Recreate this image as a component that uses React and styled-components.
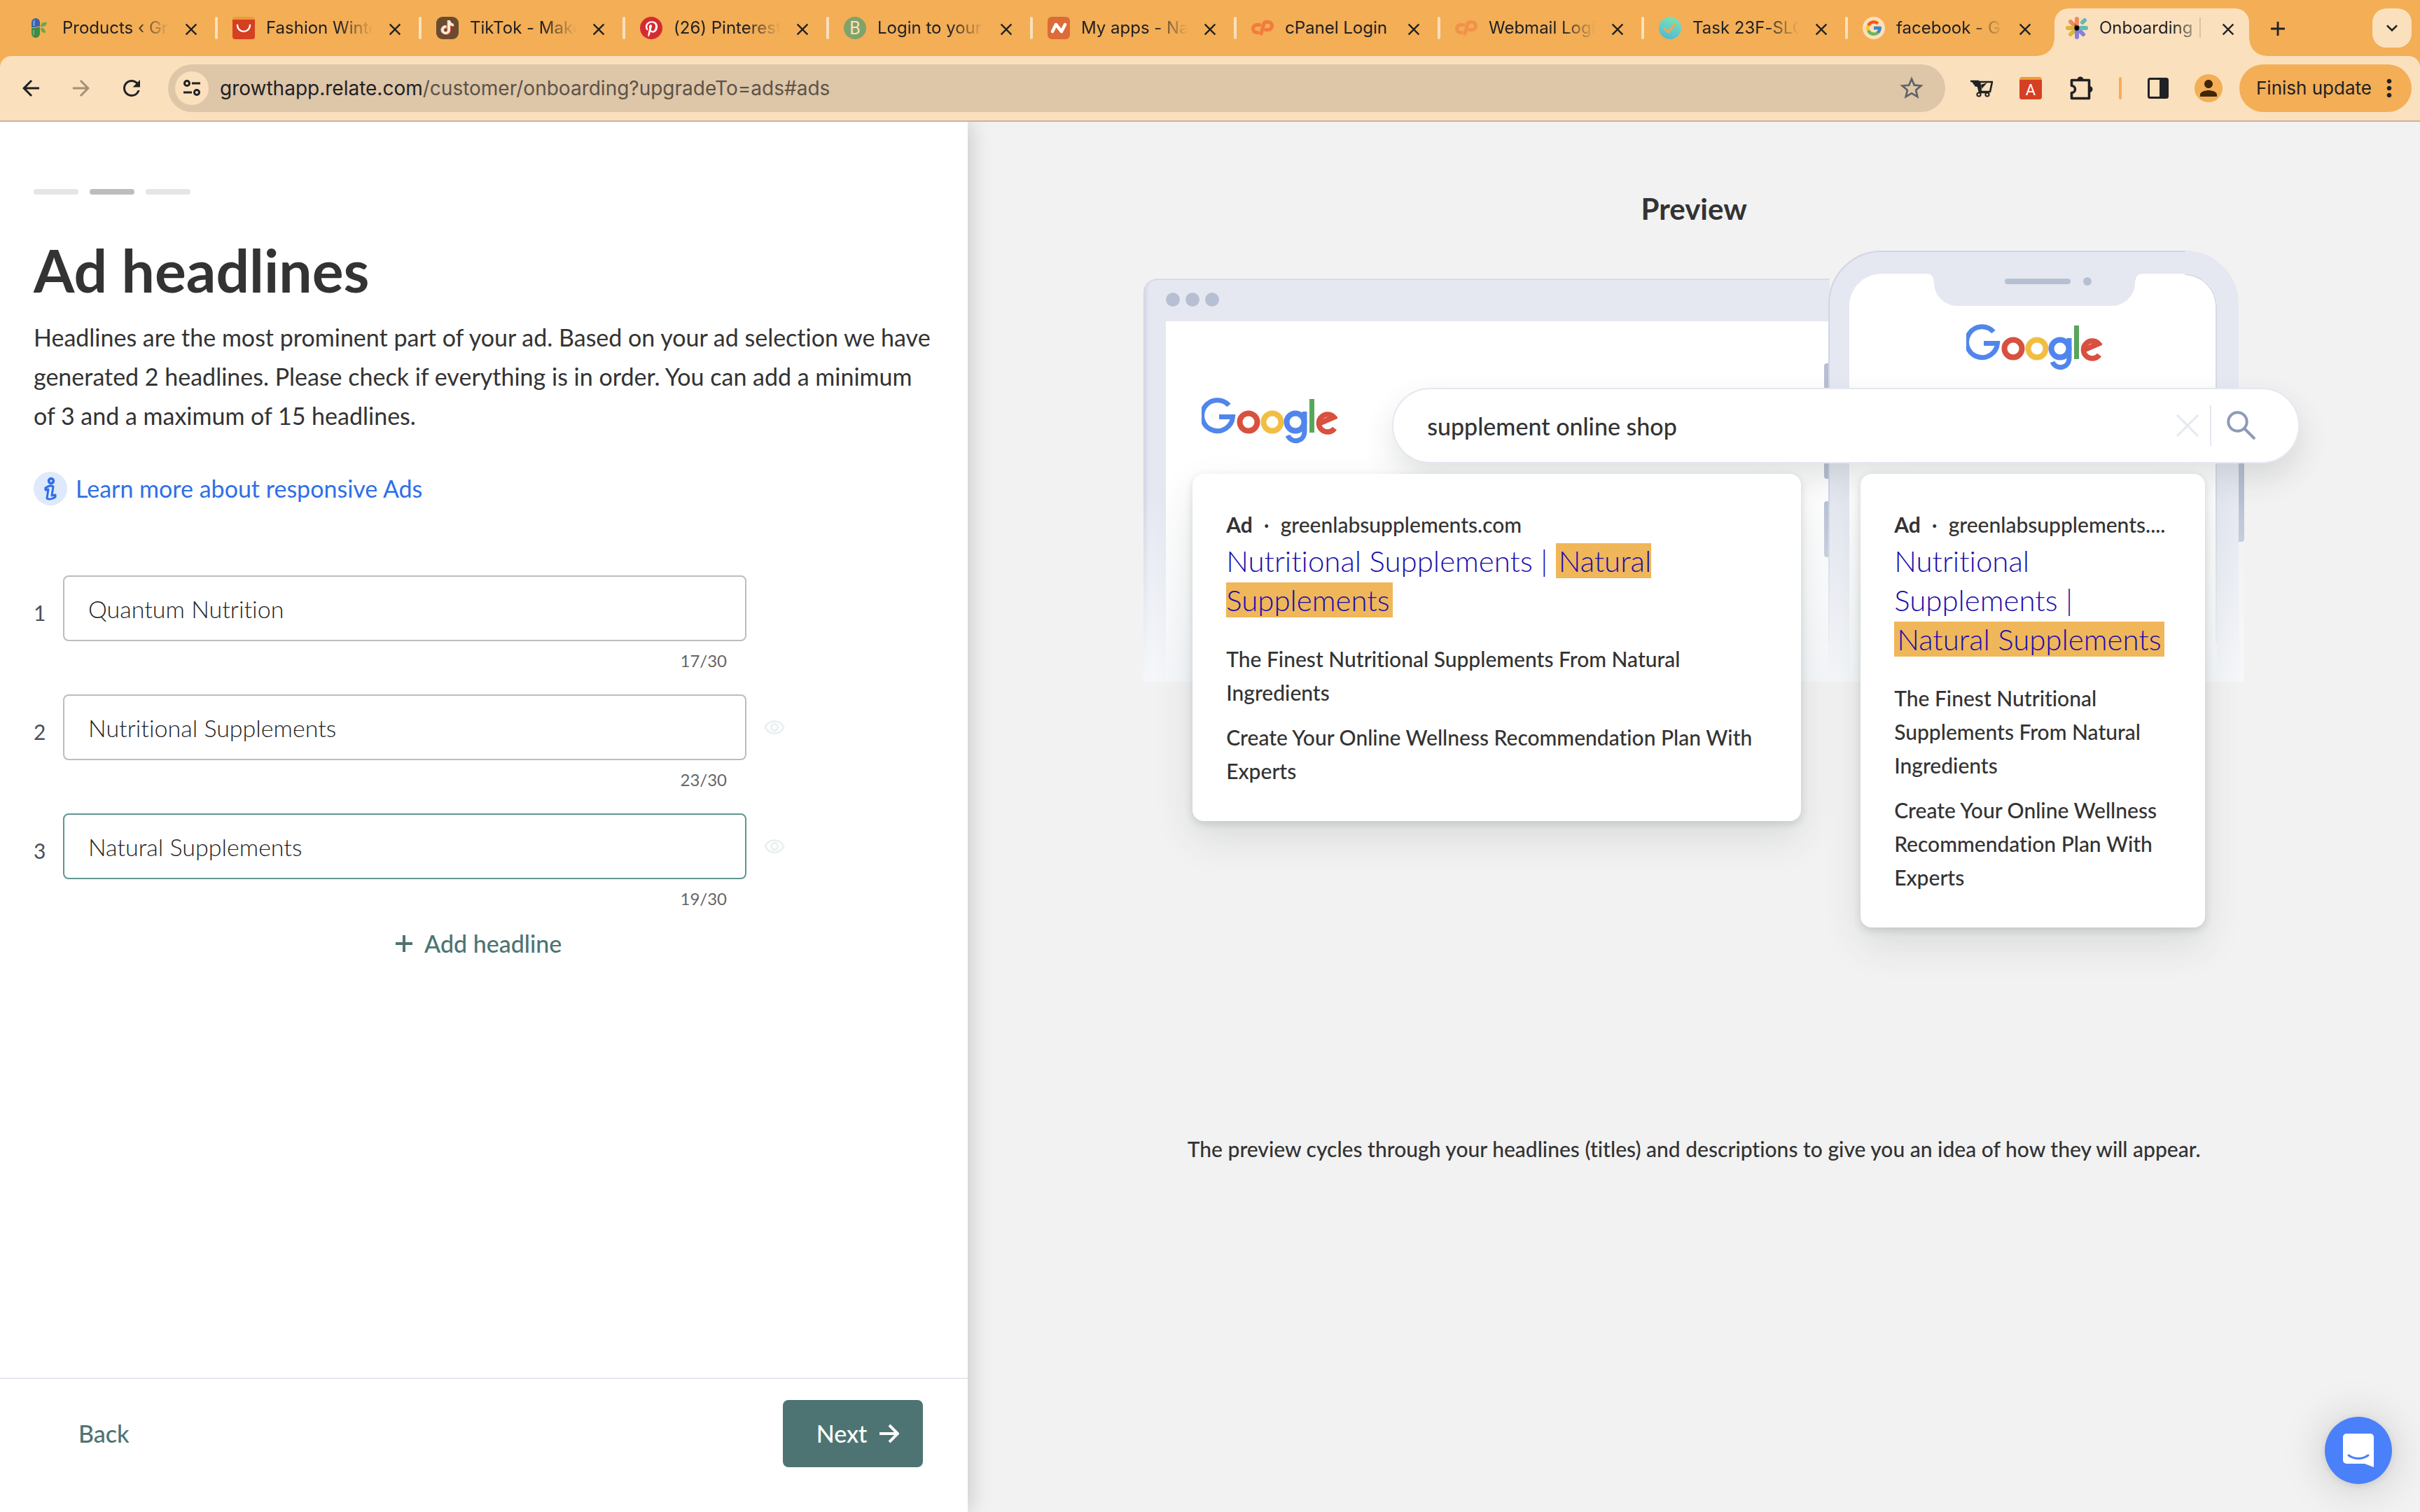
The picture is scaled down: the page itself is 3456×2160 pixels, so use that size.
import React from "react";
import styled, { createGlobalStyle } from "styled-components";
import {
  MdArrowBack,
  MdArrowForward,
  MdRefresh,
  MdStarBorder,
  MdClose,
  MdAdd,
  MdKeyboardArrowDown,
  MdPerson,
  MdMoreVert,
  MdOutlineRemoveRedEye,
} from "react-icons/md";
import { FcGoogle } from "react-icons/fc";
import { FaPinterestP, FaTiktok } from "react-icons/fa";

const color = {
  strip: "#f3ae56",
  bar: "#fbe0bd",
  omnibox: "#dec6a8",
  chromeInk: "#202124",
  ink: "#333333",
  teal: "#4d7472",
  link: "#2f6fe8",
  adTitle: "#1a0dab",
  highlight: "#f0b65a",
  canvas: "#f2f2f2",
  frame: "#e5e8f1",
  frameDark: "#b7c0d3",
};

const uiFont = `Inter, Roboto, sans-serif`;
const textFont = `Lato, "Open Sans", sans-serif`;

const GlobalStyle = createGlobalStyle`
  *, *::before, *::after { box-sizing: border-box; }
  body {
    margin: 0;
    background: ${color.canvas};
    font-family: ${textFont};
    font-variant-ligatures: none;
    color: ${color.ink};
  }
  h1, h2, p, ol, form { margin: 0; padding: 0; }
  button, input { font-family: inherit; font-variant-ligatures: none; }
  svg { display: block; flex: none; }
`;

/* ---------- browser chrome ---------- */

const Page = styled.div`
  min-height: 100vh;
  display: flex;
  flex-direction: column;
`;

const Chrome = styled.header`
  background: ${color.strip};
  font-family: ${uiFont};
  color: ${color.chromeInk};
`;

const TabStrip = styled.nav`
  height: 80px;
  display: flex;
  align-items: stretch;
  padding: 0 12px 0 20px;
`;

const Tab = styled.div`
  flex: 0 1 291px;
  min-width: 0;
  display: flex;
  align-items: center;
  padding-left: 21px;
  &::after {
    content: "";
    width: 4px;
    height: 32px;
    margin-left: auto;
    border-radius: 2px;
    background: ${(p) => (p.$divider ? color.bar : "transparent")};
  }
`;

const ActiveTab = styled.div`
  position: relative;
  flex: 0 1 278px;
  min-width: 0;
  margin: 12px 0 0 4px;
  display: flex;
  align-items: center;
  padding: 0 0 12px 16px;
  background: ${color.bar};
  border-radius: 20px 20px 0 0;
  &::before,
  &::after {
    content: "";
    position: absolute;
    bottom: 0;
    width: 24px;
    height: 24px;
  }
  &::before {
    right: 100%;
    background: radial-gradient(circle at 0 0, transparent 23px, ${color.bar} 24px);
  }
  &::after {
    left: 100%;
    background: radial-gradient(circle at 100% 0, transparent 23px, ${color.bar} 24px);
  }
`;

const TabTitle = styled.span`
  flex: 0 0 152px;
  margin: 0 18px 0 16px;
  overflow: hidden;
  white-space: nowrap;
  font-size: 24px;
  line-height: 32px;
  mask-image: ${(p) =>
    p.$whole ? "none" : "linear-gradient(90deg, #000 104px, transparent 152px)"};
`;

const IconButton = styled.button`
  flex: none;
  width: ${(p) => p.$size}px;
  height: ${(p) => p.$size}px;
  padding: 0;
  border: 0;
  display: grid;
  place-items: center;
  background: ${(p) => p.$fill || "transparent"};
  border-radius: ${(p) => p.$round || 0}px;
  color: ${(p) => p.$ink || color.chromeInk};
`;

const NewTab = styled.div`
  flex: 1;
  display: flex;
  align-items: center;
  padding-left: 24px;
`;

const TabMenu = styled.div`
  display: flex;
  align-items: center;
`;

const Toolbar = styled.div`
  height: 94px;
  display: flex;
  align-items: center;
  padding: 0 12px 2px 20px;
  background: ${color.bar};
  border-radius: 16px 16px 0 0;
  box-shadow: inset 0 -2px 0 #c9b39a;
`;

const NavButtons = styled.div`
  display: flex;
  gap: 24px;
  margin-right: 28px;
`;

const Omnibox = styled.div`
  flex: 1;
  min-width: 0;
  height: 68px;
  display: flex;
  align-items: center;
  padding: 0 28px 0 10px;
  border-radius: 34px;
  background: ${color.omnibox};
`;

const Address = styled.div`
  flex: 1;
  min-width: 0;
  margin-left: 16px;
  font-size: 28px;
  line-height: 36px;
  color: #5b5348;
  white-space: nowrap;
  overflow: hidden;
`;

const Host = styled.span`
  color: ${color.chromeInk};
`;

const Extensions = styled.div`
  display: flex;
  align-items: center;
  padding: 0 24px 0 34px;
  gap: 34px;
`;

const ExtensionDivider = styled.span`
  width: 4px;
  height: 32px;
  border-radius: 2px;
  background: ${color.strip};
`;

const Update = styled.button`
  width: 246px;
  height: 68px;
  padding: 0 12px 0 24px;
  border: 0;
  border-radius: 34px;
  display: flex;
  align-items: center;
  justify-content: space-between;
  background: ${color.strip};
  color: ${color.chromeInk};
  font-size: 26px;
  line-height: 32px;
  white-space: nowrap;
`;

/* ---------- editor panel ---------- */

const Workspace = styled.div`
  flex: 1;
  display: flex;
`;

const Editor = styled.section`
  position: relative;
  z-index: 1;
  flex: 0 0 40%;
  display: flex;
  flex-direction: column;
  background: #fff;
  box-shadow: 0 0 32px rgba(0, 0, 0, 0.22);
  clip-path: inset(0 -60px 0 0);
`;

const EditorBody = styled.main`
  flex: 1;
  padding: 96px 48px 0;
`;

const Steps = styled.div`
  display: flex;
  gap: 16px;
`;

const Step = styled.span`
  width: 64px;
  height: 8px;
  border-radius: 4px;
  background: ${(p) => (p.$current ? "#bdbdbd" : "#e5e5e5")};
`;

const Title = styled.h1`
  margin-top: 60px;
  font-size: 84px;
  line-height: 96px;
  font-weight: 700;
`;

const Intro = styled.p`
  margin-top: 20px;
  font-size: 34px;
  line-height: 56px;
`;

const LearnMore = styled.a`
  display: flex;
  align-items: center;
  align-self: flex-start;
  width: fit-content;
  gap: 12px;
  margin-top: 52px;
  font-size: 34px;
  line-height: 48px;
  color: ${color.link};
  text-decoration: none;
`;

const Headlines = styled.ol`
  margin-top: 100px;
  max-width: 1074px;
  display: grid;
  gap: 32px;
  list-style: none;
`;

const HeadlineRow = styled.li`
  display: grid;
  grid-template-columns: 18px 1fr 32px;
  column-gap: 24px;
  align-items: center;
`;

const Index = styled.label`
  padding-top: 12px;
  font-size: 30px;
  line-height: 40px;
  color: #4a505c;
`;

const HeadlineInput = styled.input`
  width: 100%;
  height: 94px;
  padding: 0 34px;
  border: 2px solid ${(p) => (p.$active ? "#5f9592" : "#bdbdbd")};
  border-radius: 8px;
  outline: 0;
  background: #fff;
  font-size: 34px;
  font-weight: 300;
  color: #222;
`;

const Counter = styled.span`
  grid-column: 2;
  margin-top: 12px;
  padding-right: 28px;
  text-align: right;
  font-size: 24px;
  line-height: 32px;
  color: #666;
`;

const AddRow = styled.div`
  margin-top: 28px;
  padding-right: 16px;
  display: flex;
  justify-content: center;
`;

const TextButton = styled.button`
  display: flex;
  align-items: center;
  gap: 16px;
  padding: 0;
  border: 0;
  background: none;
  color: ${color.teal};
  font-size: 34px;
  font-weight: 500;
  line-height: 40px;
`;

const EditorFooter = styled.footer`
  height: 192px;
  border-top: 2px solid #e8e8f0;
  padding: 30px 64px 0 112px;
  display: flex;
  justify-content: space-between;
  align-items: flex-start;
`;

const BackSlot = styled.div`
  height: 96px;
  display: flex;
  align-items: center;
`;

const NextButton = styled.button`
  height: 96px;
  padding: 0 34px 0 48px;
  border: 0;
  border-radius: 8px;
  display: flex;
  align-items: center;
  gap: 18px;
  background: ${color.teal};
  color: #fff;
  font-size: 34px;
  font-weight: 500;
  line-height: 40px;
`;

/* ---------- preview panel ---------- */

const Preview = styled.section`
  flex: 1;
  min-width: 0;
  display: flex;
  flex-direction: column;
  align-items: center;
  padding-top: 100px;
  background: ${color.canvas};
`;

const PreviewTitle = styled.h2`
  font-size: 42px;
  line-height: 48px;
  font-weight: 700;
`;

const Stage = styled.div`
  position: relative;
  width: 1572px;
  margin-top: 36px;
  padding: 319px 56px 0 70px;
  display: grid;
  grid-template-columns: 869fr 492fr;
  column-gap: 85px;
  align-items: start;
`;

const Devices = styled.svg`
  position: absolute;
  left: 0;
  top: 0;
`;

const SearchBar = styled.div`
  position: absolute;
  left: 355px;
  right: -79px;
  top: 196px;
  height: 108px;
  padding: 0 60px 0 48px;
  display: flex;
  align-items: center;
  border: 2px solid ${color.frame};
  border-radius: 54px;
  background: #fff;
  box-shadow: 0 20px 44px rgba(40, 60, 50, 0.14);
`;

const SearchInput = styled.input`
  flex: 1;
  min-width: 0;
  padding: 0;
  border: 0;
  outline: 0;
  background: none;
  color: ${color.ink};
  font-size: 34px;
  font-weight: 500;
`;

const SearchIcons = styled.div`
  display: flex;
  align-items: center;
  gap: 16px;
`;

const Rule = styled.span`
  width: 2px;
  height: 58px;
  margin-right: 6px;
  background: ${color.frame};
`;

const AdCard = styled.article`
  position: relative;
  min-width: 0;
  padding: 48px;
  border-radius: 16px;
  background: #fff;
  box-shadow: 0 24px 56px rgba(40, 60, 50, 0.12), 0 4px 12px rgba(40, 60, 50, 0.16);
`;

const AdSource = styled.div`
  display: flex;
  gap: 16px;
  font-size: 30px;
  font-weight: 500;
  line-height: 48px;
`;

const Domain = styled.span`
  min-width: 0;
  overflow: hidden;
  white-space: nowrap;
`;

const AdTitle = styled.p`
  font-size: 42px;
  line-height: 56px;
  font-weight: 300;
  color: ${color.adTitle};
`;

const Mark = styled.mark`
  padding: 0 4px;
  color: inherit;
  background: ${color.highlight};
`;

const AdText = styled.p`
  margin-top: ${(p) => (p.$first ? 32 : 16)}px;
  font-size: 30px;
  font-weight: 500;
  line-height: 48px;
`;

const Caption = styled.p`
  margin-top: 292px;
  font-size: 30px;
  font-weight: 500;
  line-height: 48px;
`;

const ChatButton = styled.button`
  position: fixed;
  z-index: 2;
  right: 40px;
  bottom: 40px;
  width: 96px;
  height: 96px;
  padding: 0;
  border: 0;
  border-radius: 50%;
  display: grid;
  place-items: center;
  background: #4a80fa;
  box-shadow: 0 2px 12px rgba(0, 0, 0, 0.1), 0 4px 64px rgba(0, 0, 0, 0.18);
`;

/* ---------- icons ---------- */

const Fav = ({ children }) => (
  <svg width="32" height="32" viewBox="0 0 32 32" aria-hidden="true">
    {children}
  </svg>
);

const CapsuleIcon = () => (
  <Fav>
    <path d="M4 15V8a6 6 0 0 1 12 0v6c-3-1-8 2-12 1Z" fill="#3a62a8" />
    <path d="M4 16c4 1 9-2 12-1v9a6 6 0 0 1-12 0Z" fill="#3e8a46" />
    <path d="M6 8a4 4 0 0 1 3-4v9H6Z" fill="#6f95cf" />
    <path d="M6 19h2v8a4 4 0 0 1-2-3Z" fill="#74b56a" />
    <path d="M17 14c0-5 4-7 9-6-1 5-4 7-9 6ZM17 16c4-1 7 2 7 7-4 0-7-2-7-7Z" fill="#6aa84a" />
  </Fav>
);

const BagIcon = ({ letter }) => (
  <Fav>
    <rect width="32" height="32" rx="4" fill="#ee9b38" />
    <path d="M0 4h32v24a4 4 0 0 1-4 4H4a4 4 0 0 1-4-4Z" fill="#d54022" />
    {letter ? (
      <text x="16" y="26" textAnchor="middle" fontFamily="Roboto" fontSize="22" fill="#fff">
        {letter}
      </text>
    ) : (
      <path d="M7 12a9 9 0 0 0 18 0" fill="none" stroke="#fff" strokeWidth="2.4" strokeLinecap="round" />
    )}
  </Fav>
);

const TikTokIcon = () => (
  <Fav>
    <rect width="32" height="32" rx="9" fill="#6b4a2e" />
    <FaTiktok x="7" y="6" size="20" color="#e0503f" />
    <FaTiktok x="5" y="5" size="20" color="#7fd8cf" />
    <FaTiktok x="6" y="5" size="20" color="#fdebd2" />
  </Fav>
);

const PinterestIcon = () => (
  <Fav>
    <circle cx="16" cy="16" r="16" fill="#d52b30" />
    <FaPinterestP x="5" y="6" size="23" color="#fff" />
  </Fav>
);

const BonsaiIcon = () => (
  <Fav>
    <circle cx="16" cy="16" r="16" fill="#7fa36a" />
    <text x="16" y="25" textAnchor="middle" fontFamily="Roboto" fontSize="25" fill="#fbe0bd">
      B
    </text>
  </Fav>
);

const AppsIcon = () => (
  <Fav>
    <rect width="32" height="32" rx="6" fill="#dc6b37" />
    <path d="m7 21 5-10 8 10 5-10" fill="none" stroke="#fff" strokeWidth="4.5" strokeLinecap="round" strokeLinejoin="round" />
  </Fav>
);

const CpIcon = ({ tint }) => (
  <Fav>
    <g fill="none" stroke={tint} strokeWidth="5" strokeLinecap="round" strokeLinejoin="round">
      <path d="M12 11.500H8a5.500 5.500 0 0 0 0 11h1" />
      <path d="m14 24 4-14q.6-2.500 3-2.500h3a5.500 5.500 0 0 1 0 11h-3.500" />
    </g>
  </Fav>
);

const TaskIcon = () => (
  <Fav>
    <defs>
      <linearGradient id="task" x1="0.6" y1="0" x2="0.3" y2="1">
        <stop offset="0" stopColor="#7ee0b4" />
        <stop offset="1" stopColor="#4fb9d6" />
      </linearGradient>
    </defs>
    <circle cx="16" cy="16" r="16" fill="url(#task)" />
    <path d="m8 17 6 5 9-12" fill="none" stroke="#f0a952" strokeWidth="3" strokeLinecap="round" />
  </Fav>
);

const GoogleTabIcon = () => (
  <Fav>
    <circle cx="16" cy="16" r="16" fill="#fbe0bd" />
    <FcGoogle x="3" y="3" size="26" opacity="0.85" />
  </Fav>
);

const PetalsIcon = () => (
  <Fav>
    <g strokeWidth="6" strokeLinecap="round">
      <path d="M16 16V3" stroke="#f08a5d" />
      <path d="M16 16 7 7" stroke="#f08a5d" />
      <path d="M16 16H3" stroke="#dcb53c" />
      <path d="M16 16 7 25" stroke="#dcb53c" />
      <path d="M16 16v13" stroke="#8580dd" />
      <path d="m16 16 9 9" stroke="#8580dd" />
      <path d="M16 16h13" stroke="#68b8b5" />
      <path d="m24 8 3-3" stroke="#68b8b5" />
    </g>
    <path d="m13 10 3 2 3 1v3l-1 3-2 2-3-2-1-3Z" fill="#3a2a3a" opacity="0.5" />
    <circle cx="16" cy="16" r="3.4" fill="#000" />
  </Fav>
);

const TuneIcon = () => (
  <svg width="24" height="24" viewBox="0 0 24 24" fill="none" stroke="#202124" strokeWidth="3" aria-hidden="true">
    <circle cx="5" cy="5" r="3.5" />
    <path d="M12 5h12M0 18h12" />
    <circle cx="19" cy="18" r="3.5" />
  </svg>
);

const CartIcon = () => (
  <svg width="32" height="32" viewBox="0 0 32 32" aria-hidden="true">
    <path d="M0 6h11l1 4-8-1M6 12l5 1 2 9h14" fill="none" stroke="#202124" strokeWidth="2.6" />
    <path d="M13 7h18l-3 14H15Z" fill="none" stroke="#202124" strokeWidth="2.6" />
    <path d="M2 7h10l3 11-4-1-1-4-4-1Z" fill="#202124" />
    <path d="m15 11 9-3-8 9Z" fill="#202124" />
    <circle cx="12" cy="25" r="2.6" fill="none" stroke="#202124" strokeWidth="2" />
    <circle cx="24" cy="25" r="2.6" fill="none" stroke="#202124" strokeWidth="2" />
  </svg>
);

const PuzzleIcon = () => (
  <svg width="36" height="36" viewBox="0 0 36 36" aria-hidden="true">
    <path
      d="M4.500 6.500H29.500V32.500H4.500V24.500A5 5 0 0 0 4.500 14.500Z"
      fill="none"
      stroke="#202124"
      strokeWidth="3.6"
      strokeLinejoin="round"
    />
    <path d="M12.500 6a4.500 4.500 0 0 1 9 0ZM30 15a4.500 4.500 0 0 1 0 9Z" fill="#202124" />
  </svg>
);

const SidePanelIcon = () => (
  <svg width="30" height="30" viewBox="0 0 30 30" aria-hidden="true">
    <rect x="1.5" y="1.5" width="27" height="27" rx="2" fill="none" stroke="#202124" strokeWidth="3" />
    <path d="M17 1h11v28H17Z" fill="#202124" />
  </svg>
);

const InfoIcon = () => (
  <svg width="48" height="48" viewBox="0 0 48 48" aria-hidden="true">
    <circle cx="24" cy="24" r="24" fill="#dfe9fc" />
    <circle cx="25" cy="13" r="3.4" fill="none" stroke={color.link} strokeWidth="3.6" />
    <path
      d="M17 23c4-3 8-4 11-2l-2 13 5-1v3c-4 3-9 4-12 2l2-13-4 1Z"
      fill="none"
      stroke={color.link}
      strokeWidth="3"
      strokeLinejoin="round"
    />
  </svg>
);

const PlusIcon = () => (
  <svg width="26" height="26" viewBox="0 0 26 26" aria-hidden="true">
    <path d="M13 1v24M1 13h24" stroke={color.teal} strokeWidth="4" />
  </svg>
);

const ArrowIcon = () => (
  <svg width="28" height="28" viewBox="0 0 28 28" aria-hidden="true">
    <path d="M0 14h25M14 2l12 12-12 12" fill="none" stroke="#fff" strokeWidth="4" />
  </svg>
);

const ClearIcon = () => (
  <svg width="32" height="32" viewBox="0 0 32 32" aria-hidden="true">
    <path d="M1 1l30 30M31 1 1 31" stroke="#e5e8f1" strokeWidth="3" />
  </svg>
);

const MagnifierIcon = () => (
  <svg width="42" height="42" viewBox="0 0 42 42" fill="none" stroke="#8e9ab6" strokeWidth="4" aria-hidden="true">
    <circle cx="15.5" cy="15.5" r="13.2" />
    <path d="m25 25 15 15" />
  </svg>
);

const ChatIcon = () => (
  <svg width="44" height="48" viewBox="0 0 44 48" aria-hidden="true">
    <path d="M5 0h34a5 5 0 0 1 5 5v43l-13-5H5a5 5 0 0 1-5-5V5a5 5 0 0 1 5-5Z" fill="#fff" />
    <path d="M8 31c8 6 20 6 28 0" fill="none" stroke="#4a80fa" strokeWidth="3" strokeLinecap="round" />
  </svg>
);

/* Search engine logo: rings, arcs and bars in the four brand colours. */
const SearchLogo = ({ x, y }) => (
  <svg x={x} y={y} width="194" height="66" viewBox="0 0 194 66" fill="none" strokeWidth="8">
    <path d="M39 11A22 22 0 1 0 44.500 27.500H25" stroke="#5086ec" strokeWidth="7" />
    <circle cx="67" cy="35" r="12.500" stroke="#d8503f" />
    <circle cx="101" cy="35" r="12.500" stroke="#f2be42" />
    <circle cx="134" cy="35" r="12.500" stroke="#5086ec" />
    <path d="M147 20V48c0 16-19 18-24 6" stroke="#5086ec" strokeWidth="7" />
    <path d="M157.500 2v48" stroke="#58a65c" strokeWidth="7" />
    <path d="M190 44A12.500 12.500 0 1 1 189 28L168 37" stroke="#d8503f" strokeWidth="7.500" />
  </svg>
);

const DeviceArt = () => (
  <Devices width="1572" height="616" viewBox="0 0 1572 616" aria-label="Google" role="img">
    <defs>
      <linearGradient id="fade" x1="0" y1="0" x2="0" y2="1">
        <stop offset="0" stopColor="#f5f7fa" stopOpacity="0" />
        <stop offset="1" stopColor="#f5f7fa" />
      </linearGradient>
      <linearGradient id="edge" x1="0" y1="0" x2="1" y2="0">
        <stop offset="0" stopColor="#cfd5e3" />
        <stop offset="1" stopColor="#e5e8f1" />
      </linearGradient>
    </defs>

    {/* desktop browser */}
    <path d="M0 616V60a20 20 0 0 1 20-20H980V616Z" fill={color.frame} />
    <path d="M0 616V60a20 20 0 0 1 8-16V616Z" fill="url(#edge)" />
    <path d="M1 60a20 20 0 0 1 19-19H980" fill="none" stroke="#d5dbe8" strokeWidth="2" />
    <path d="M32 101H980V616H32Z" fill="#fff" />
    {[42, 70, 98].map((cx) => (
      <circle key={cx} cx={cx} cy="70" r="10" fill={color.frameDark} />
    ))}
    <SearchLogo x="83" y="210" />

    {/* phone */}
    <g fill={color.frameDark}>
      <rect x="972" y="161" width="12" height="40" rx="4" />
      <rect x="972" y="246" width="12" height="80" rx="4" />
      <rect x="972" y="358" width="12" height="80" rx="4" />
      <rect x="1556" y="280" width="16" height="136" rx="4" />
    </g>
    <path d="M978 616V76A76 76 0 0 1 1054 0H1488A76 76 0 0 1 1564 76V616Z" fill={color.frame} />
    <path d="M979 560V76A75 75 0 0 1 1054 1H1488" fill="none" stroke="#d0d6e4" strokeWidth="2" />
    <path
      d="M1008 616V79A46 46 0 0 1 1054 33H1118C1126 33 1128 38 1129 46A33 33 0 0 0 1162 79H1383A33 33 0 0 0 1416 46C1417 38 1419 33 1427 33H1487A46 46 0 0 1 1533 79V616Z"
      fill="#fff"
    />
    <path d="M1487 34A46 46 0 0 1 1532 79V560" fill="none" stroke="#d5dbe8" strokeWidth="2" />
    <rect x="1230" y="40" width="94" height="8" rx="4" fill={color.frameDark} />
    <circle cx="1348" cy="44" r="6" fill={color.frameDark} />
    <SearchLogo x="1175" y="105" />
    <rect x="0" y="350" width="1572" height="266" fill="url(#fade)" />
  </Devices>
);

/* ---------- data ---------- */

const tabs = [
  { icon: <CapsuleIcon />, title: "Products ‹ Gr" },
  { icon: <BagIcon />, title: "Fashion Winte" },
  { icon: <TikTokIcon />, title: "TikTok - Make" },
  { icon: <PinterestIcon />, title: "(26) Pinterest" },
  { icon: <BonsaiIcon />, title: "Login to your" },
  { icon: <AppsIcon />, title: "My apps - Na" },
  { icon: <CpIcon tint="#f27b3d" />, title: "cPanel Login", whole: true },
  { icon: <CpIcon tint="#f1924a" />, title: "Webmail Logi" },
  { icon: <TaskIcon />, title: "Task 23F-SLO" },
  { icon: <GoogleTabIcon />, title: "facebook - G" },
];

const headlines = [
  { value: "Quantum Nutrition", count: "17/30" },
  { value: "Nutritional Supplements", count: "23/30", shown: true },
  { value: "Natural Supplements", count: "19/30", shown: true, active: true },
];

/* ---------- sections ---------- */

const CloseTab = ({ title }) => (
  <IconButton $size={24} aria-label={`Close ${title}`}>
    <MdClose size={28} />
  </IconButton>
);

const BrowserChrome = () => (
  <Chrome>
    <TabStrip aria-label="Tabs">
      {tabs.map((tab, i) => (
        <Tab key={tab.title} $divider={i < tabs.length - 1}>
          {tab.icon}
          <TabTitle $whole={tab.whole}>{tab.title}</TabTitle>
          <CloseTab title={tab.title} />
        </Tab>
      ))}
      <ActiveTab>
        <PetalsIcon />
        <TabTitle>Onboarding |</TabTitle>
        <CloseTab title="Onboarding" />
      </ActiveTab>
      <NewTab>
        <IconButton $size={32} aria-label="New tab">
          <MdAdd size={34} />
        </IconButton>
      </NewTab>
      <TabMenu>
        <IconButton $size={56} $round={20} $fill={color.bar} aria-label="Search tabs">
          <MdKeyboardArrowDown size={32} />
        </IconButton>
      </TabMenu>
    </TabStrip>
    <Toolbar>
      <NavButtons>
        <IconButton $size={48} aria-label="Back">
          <MdArrowBack size={36} />
        </IconButton>
        <IconButton $size={48} $ink="#a39078" aria-label="Forward">
          <MdArrowForward size={36} />
        </IconButton>
        <IconButton $size={48} aria-label="Reload">
          <MdRefresh size={36} />
        </IconButton>
      </NavButtons>
      <Omnibox>
        <IconButton $size={48} $round={24} $fill={color.bar} aria-label="Site information">
          <TuneIcon />
        </IconButton>
        <Address>
          <Host>growthapp.relate.com</Host>/customer/onboarding?upgradeTo=ads#ads
        </Address>
        <IconButton $size={40} $ink="#5f6368" aria-label="Bookmark">
          <MdStarBorder size={40} />
        </IconButton>
      </Omnibox>
      <Extensions>
        <IconButton $size={36} aria-label="Shopping">
          <CartIcon />
        </IconButton>
        <IconButton $size={36} aria-label="Dictionary">
          <BagIcon letter="A" />
        </IconButton>
        <IconButton $size={40} aria-label="Extensions">
          <PuzzleIcon />
        </IconButton>
        <ExtensionDivider />
        <IconButton $size={36} aria-label="Side panel">
          <SidePanelIcon />
        </IconButton>
        <IconButton $size={40} $round={20} $fill={color.strip} $ink="#3f2708" aria-label="Profile">
          <MdPerson size={36} />
        </IconButton>
      </Extensions>
      <Update>
        Finish update
        <MdMoreVert size={40} />
      </Update>
    </Toolbar>
  </Chrome>
);

const HeadlineEditor = () => (
  <Editor>
    <EditorBody>
      <Steps>
        <Step />
        <Step $current />
        <Step />
      </Steps>
      <Title>Ad headlines</Title>
      <Intro>
        Headlines are the most prominent part of your ad. Based on your ad selection we have
        generated 2 headlines. Please check if everything is in order. You can add a minimum
        of&nbsp;3 and a maximum of 15 headlines.
      </Intro>
      <LearnMore href="#responsive-ads">
        <InfoIcon />
        Learn more about responsive Ads
      </LearnMore>
      <Headlines>
        {headlines.map((h, i) => (
          <HeadlineRow key={h.value}>
            <Index htmlFor={`headline-${i}`}>{i + 1}</Index>
            <HeadlineInput id={`headline-${i}`} defaultValue={h.value} $active={h.active} />
            {h.shown ? <MdOutlineRemoveRedEye size={32} color="#e6f1f0" /> : <span />}
            <Counter>{h.count}</Counter>
          </HeadlineRow>
        ))}
      </Headlines>
      <AddRow>
        <TextButton>
          <PlusIcon />
          Add headline
        </TextButton>
      </AddRow>
    </EditorBody>
    <EditorFooter>
      <BackSlot>
        <TextButton>Back</TextButton>
      </BackSlot>
      <NextButton>
        Next
        <ArrowIcon />
      </NextButton>
    </EditorFooter>
  </Editor>
);

const Ad = ({ domain }) => (
  <AdCard>
    <AdSource>
      <strong>Ad</strong>
      <span>·</span>
      <Domain>{domain}</Domain>
    </AdSource>
    <AdTitle>
      Nutritional Supplements | <Mark>Natural Supplements</Mark>
    </AdTitle>
    <AdText $first>The Finest Nutritional Supplements From Natural Ingredients</AdText>
    <AdText>Create Your Online Wellness Recommendation Plan With Experts</AdText>
  </AdCard>
);

const AdPreview = () => (
  <Preview>
    <PreviewTitle>Preview</PreviewTitle>
    <Stage>
      <DeviceArt />
      <SearchBar>
        <SearchInput aria-label="Search" defaultValue="supplement online shop" />
        <SearchIcons>
          <ClearIcon />
          <Rule />
          <MagnifierIcon />
        </SearchIcons>
      </SearchBar>
      <Ad domain="greenlabsupplements.com" />
      <Ad domain="greenlabsupplements...." />
    </Stage>
    <Caption>
      The preview cycles through your headlines (titles) and descriptions to give you an idea of how
      they will appear.
    </Caption>
  </Preview>
);

export default function App() {
  return (
    <Page>
      <GlobalStyle />
      <BrowserChrome />
      <Workspace>
        <HeadlineEditor />
        <AdPreview />
      </Workspace>
      <ChatButton aria-label="Open chat">
        <ChatIcon />
      </ChatButton>
    </Page>
  );
}
